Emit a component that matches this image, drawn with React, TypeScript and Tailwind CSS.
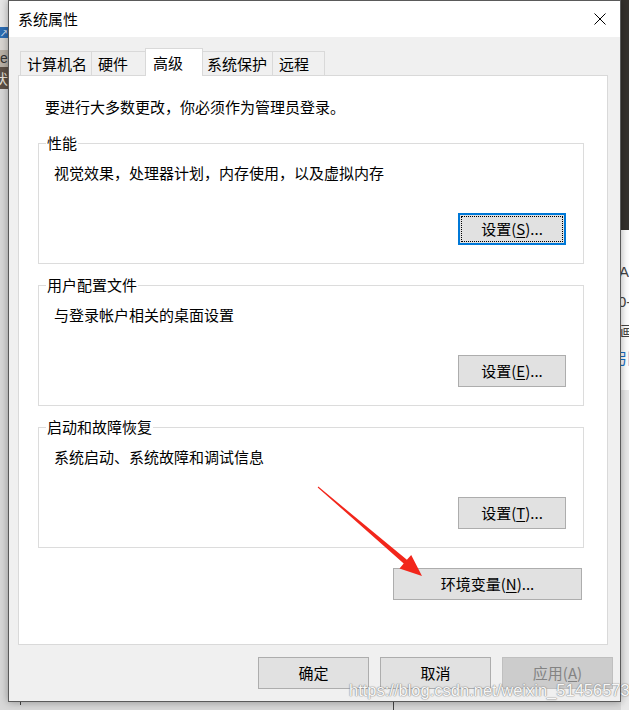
import type { ReactNode } from 'react'

// ============================================
// 系统属性 - 高级
// ============================================

const font = "font-['Noto_Sans_CJK_SC','Microsoft_YaHei',sans-serif]"

interface BtnProps {
  children: ReactNode
  className?: string
  focused?: boolean
  disabled?: boolean
}

function Btn({ children, className = '', focused = false, disabled = false }: BtnProps) {
  let look = 'border border-[#adadad] bg-[#e1e1e1] text-black'
  if (focused) look = 'border-2 border-[#0078d7] bg-[#e1e1e1] text-black'
  if (disabled) look = 'border border-[#bfbfbf] bg-[#cccccc] text-[#838383]'

  return (
    <button className={`relative flex h-[32px] items-center justify-center text-[15px] leading-[20px] ${look} ${className}`}>
      {focused && <span className="absolute inset-[1px] border border-dotted border-black" />}
      <span className="relative">{children}</span>
    </button>
  )
}

interface GroupProps {
  title: string
  text: string
  children: ReactNode
}

function Group({ title, text, children }: GroupProps) {
  return (
    <div className="relative ml-[19px] flex h-[121px] w-[546px] flex-col border border-[#dcdcdc]">
      {/* Legend */}
      <span className="absolute left-[7px] top-[-11px] bg-white px-[1px] leading-[20px]">{title}</span>
      <p className="pl-[15px] pt-[19px] leading-[20px]">{text}</p>
      <div className="mt-[30px] flex justify-end pr-[17px]">{children}</div>
    </div>
  )
}

const tabs = [
  { label: '计算机名', w: 'w-[72px] pl-[6px]' },
  { label: '硬件', w: 'w-[55px] pl-[6px]' },
  { label: '高级', w: 'w-[58px] pl-[7px]', active: true },
  { label: '系统保护', w: 'w-[71px] pl-[4px]' },
  { label: '远程', w: 'w-[53px] pl-[6px]' },
]

export default function App() {
  return (
    <div className={`relative h-[710px] w-[629px] overflow-hidden bg-[#d8d8d8] text-[15px] text-black ${font}`}>
      {/* Desktop behind the dialog */}
      <div className="absolute left-0 top-0 h-[27px] w-[8px] bg-[#e6e6e6]" />
      <div className="absolute left-0 top-[27px] flex h-[11px] w-[8px] items-center justify-center bg-[#2d6db3] text-[8px] leading-none text-white">
        ↗
      </div>
      <div className="absolute left-0 top-[38px] h-[12px] w-[8px] bg-[#d9d6d2]" />
      <div className="absolute left-[-2px] top-[50px] h-[17px] w-[10px] bg-[#b9b1a6] pl-[2px] font-['Liberation_Sans',sans-serif] text-[14px] leading-[17px] text-[#333]">
        e
      </div>
      <div className="absolute left-0 top-[67px] h-[22px] w-[8px] overflow-hidden bg-[#5d5046]">
        <span className="ml-[-6px] block text-[14px] leading-[22px] text-[#e8e2da]">伏</span>
      </div>

      <div className="absolute left-[621px] top-0 h-[230px] w-[8px] bg-[#35312d]" />
      <div className="absolute left-[621px] top-[230px] flex h-[160px] w-[8px] flex-col overflow-hidden bg-white">
        <span className="ml-[-2px] mt-[33px] font-['Liberation_Sans',sans-serif] text-[15px] leading-[18px] text-[#444]">A</span>
        <span className="ml-[-3px] mt-[12px] font-['Liberation_Sans',sans-serif] text-[15px] leading-[18px] text-[#444]">0-</span>
        <span className="ml-[-1px] mt-[10px] text-[14px] leading-[18px] text-[#444]">画</span>
        <span className="ml-[-4px] mt-[10px] text-[15px] leading-[18px] text-[#1a6fc4]">引</span>
      </div>
      <div className="absolute left-[621px] top-[390px] h-[320px] w-[8px] bg-[#e9e9e9]" />
      <div className="absolute left-[393px] top-[702px] h-[8px] w-px bg-[#444]" />
      <div className="absolute left-[20px] top-[702px] h-[3px] w-px bg-[#444]" />

      {/* Window */}
      <div className="relative ml-[8px] flex h-[702px] w-[613px] flex-col border border-[#5a5a5a] shadow-[0_0_8px_rgba(0,0,0,0.35)]">
        {/* Title bar */}
        <div className="flex h-[36px] items-center justify-between bg-white pl-[9px] pr-[14px]">
          <span className="leading-[20px]">系统属性</span>
          <svg width="12" height="12" viewBox="0 0 12 12" fill="none" stroke="#000" strokeWidth="1">
            <path d="M0.5 0.5 L11.5 11.5 M11.5 0.5 L0.5 11.5" />
          </svg>
        </div>

        {/* Body */}
        <div className="flex flex-1 flex-col bg-[#f0f0f0] pt-[11px]">
          {/* Tabs */}
          <div className="ml-[11px] flex h-[27px] items-end">
            {tabs.map((t, i) =>
              t.active ? (
                <div
                  key={t.label}
                  className={`relative z-10 -mb-px -ml-px flex h-[28px] items-center border border-b-0 border-[#d9d9d9] bg-white leading-[20px] ${t.w}`}
                >
                  {t.label}
                </div>
              ) : (
                <div
                  key={t.label}
                  className={`flex h-[24px] items-center border border-b-0 border-[#d9d9d9] bg-[#f0f0f0] leading-[20px] ${i > 0 ? '-ml-px' : ''} ${t.w}`}
                >
                  {t.label}
                </div>
              ),
            )}
          </div>

          {/* Panel */}
          <div className="ml-[9px] flex h-[570px] w-[590px] flex-col border border-[#d9d9d9] bg-white">
            <p className="pl-[26px] pt-[21px] leading-[20px]">要进行大多数更改，你必须作为管理员登录。</p>

            <div className="mt-[26px]">
              <Group title="性能" text="视觉效果，处理器计划，内存使用，以及虚拟内存">
                <Btn focused className="w-[108px]">
                  设置(<u className="underline-offset-2">S</u>)...
                </Btn>
              </Group>
            </div>

            <div className="mt-[21px]">
              <Group title="用户配置文件" text="与登录帐户相关的桌面设置">
                <Btn className="w-[108px]">
                  设置(<u className="underline-offset-2">E</u>)...
                </Btn>
              </Group>
            </div>

            <div className="mt-[21px]">
              <Group title="启动和故障恢复" text="系统启动、系统故障和调试信息">
                <Btn className="w-[108px]">
                  设置(<u className="underline-offset-2">T</u>)...
                </Btn>
              </Group>
            </div>

            <div className="mt-[20px] flex justify-end pr-[25px]">
              <Btn className="w-[189px]">
                环境变量(<u className="underline-offset-2">N</u>)...
              </Btn>
            </div>
          </div>

          {/* Dialog buttons */}
          <div className="mt-[12px] flex justify-end gap-[11px] pr-[7px]">
            <Btn className="w-[111px]">确定</Btn>
            <Btn className="w-[111px]">取消</Btn>
            <Btn disabled className="w-[111px]">
              应用(<u className="underline-offset-2">A</u>)
            </Btn>
          </div>
        </div>
      </div>

      {/* Red annotation arrow */}
      <svg className="pointer-events-none absolute left-0 top-0" width="629" height="710" viewBox="0 0 629 710">
        <polygon
          fill="#f2261b"
          points="318.3,486.6 406.9,559.8 411.2,554.9 422,576 399.5,568.5 403.7,563.6 317.7,487.4"
        />
      </svg>

      {/* Watermark */}
      <span className="pointer-events-none absolute left-[349px] top-[680px] whitespace-nowrap font-['Liberation_Sans',sans-serif] text-[16.5px] leading-[20px] text-[#f7f7f7] [text-shadow:0_0_1px_#8a8a8a,0_0_1px_#8a8a8a,0_0_2px_rgba(0,0,0,0.25)]">
        https://blog.csdn.net/weixin_51456573
      </span>
    </div>
  )
}
